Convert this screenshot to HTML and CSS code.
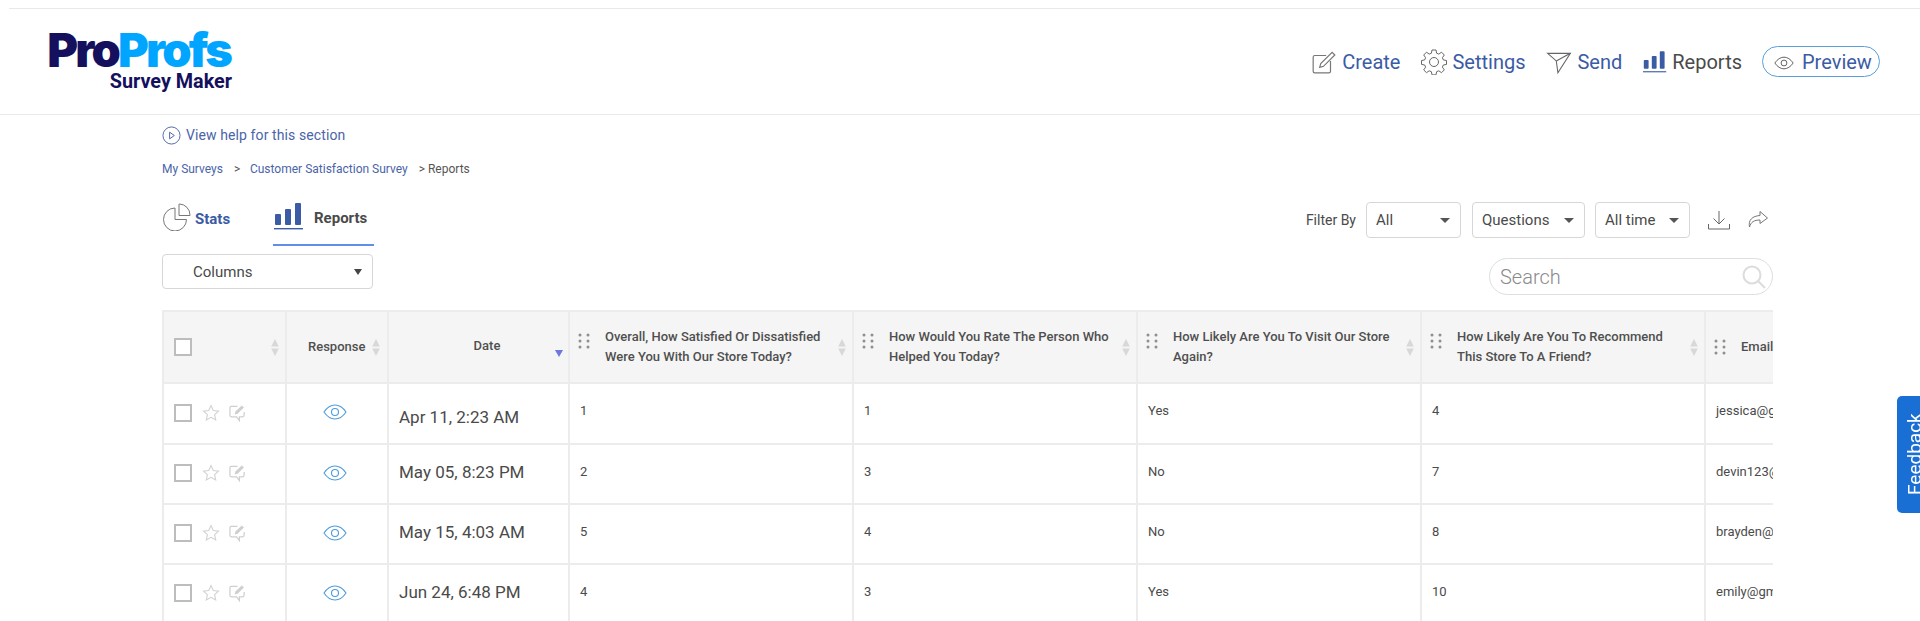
FILE: index.html
```html
<!DOCTYPE html>
<html lang="en">
<head>
<meta charset="utf-8">
<title>ProProfs Survey Maker - Reports</title>
<link rel="stylesheet" href="styles.css">
</head>
<body>
<svg class="sprites" width="0" height="0" aria-hidden="true">
  <symbol id="bars" viewBox="0 0 30 27"><rect x="1" y="11" width="6" height="11" rx="1"/><rect x="11" y="6" width="6" height="16" rx="1"/><rect x="21" y="0" width="6" height="22" rx="1"/><rect x="0" y="25" width="29" height="1.4"/></symbol>
  <symbol id="sort" viewBox="0 0 10 18"><path d="M5 0l4 8H1zM5 18l4-8H1z"/></symbol>
  <symbol id="grip" viewBox="0 0 12 16"><g><circle cx="2" cy="2" r="1.5"/><circle cx="10" cy="2" r="1.5"/><circle cx="2" cy="8" r="1.5"/><circle cx="10" cy="8" r="1.5"/><circle cx="2" cy="14" r="1.5"/><circle cx="10" cy="14" r="1.5"/></g></symbol>
  <symbol id="eye" viewBox="0 0 24 16"><path d="M1 8c3-4.500 7-7 11-7s8 2.500 11 7c-3 4.500-7 7-11 7S4 12.500 1 8z" fill="none" stroke="currentColor" stroke-width="1.100"/><circle cx="12" cy="8" r="3.500" fill="none" stroke="currentColor" stroke-width="1.100"/></symbol>
  <symbol id="star" viewBox="0 0 18 18"><path d="M9 1.500l2.300 5 5.200.6-3.900 3.500 1.100 5.400L9 13.300 4.300 16l1.100-5.400-3.900-3.500 5.200-.6z" fill="none" stroke="currentColor" stroke-width="1.100"/></symbol>
  <symbol id="note" viewBox="0 0 18 18"><path d="M9 2H2.500A1.500 1.500 0 0 0 1 3.500v8A1.500 1.500 0 0 0 2.500 13H8l3 4v-4h3.500A1.500 1.500 0 0 0 16 11.500V8" fill="none" stroke="currentColor" stroke-width="1.300"/><path d="M6 10.500l.8-3L13.500 1l2.300 2.300-6.700 6.500z" fill="currentColor"/></symbol>
</svg>

<header class="site-header">
  <div class="top-rule"></div>
  <div class="header-row">
    <a class="logo">
      <span class="logo-main"><span class="logo-pro">Pro</span><span class="logo-profs">Profs</span></span>
      <span class="logo-sub">Survey Maker</span>
    </a>
    <nav class="main-nav">
      <a class="nav-item">
        <svg class="nav-icon" viewBox="0 0 24 24" fill="none" stroke="#777" stroke-width="1.100"><path d="M14 6H3.500A1.500 1.500 0 0 0 2 7.500v13A1.500 1.500 0 0 0 3.500 22h13a1.500 1.500 0 0 0 1.500-1.500V11"/><path d="M9 13.500l-1 3.500 3.500-1L22 5.500 19.500 3z"/></svg>
        <span>Create</span>
      </a>
      <a class="nav-item">
        <svg class="nav-icon" viewBox="0 0 26 26" fill="none" stroke="#666" stroke-width="1"><path d="M11 1.500h4l.6 3.200 2.200.9 2.700-1.900 2.800 2.800-1.900 2.700.9 2.200 3.200.6v3.900l-3.200.6-.9 2.200 1.900 2.700-2.800 2.800-2.700-1.900-2.200.9-.6 3.200h-4l-.6-3.200-2.200-.9-2.700 1.900-2.800-2.800 1.900-2.700-.9-2.200-3.200-.6v-3.900l3.200-.6.9-2.200-1.900-2.700 2.800-2.800 2.700 1.900 2.200-.9z" transform="translate(0 -.5)"/><circle cx="13" cy="13" r="4.500"/></svg>
        <span>Settings</span>
      </a>
      <a class="nav-item">
        <svg class="nav-icon" viewBox="0 0 24 24" fill="none" stroke="#666" stroke-width="1"><path d="M1.500 4h21L11 22l-1.500-11z"/><path d="M9.500 11L22.500 4"/></svg>
        <span>Send</span>
      </a>
      <a class="nav-item nav-active">
        <svg class="nav-icon bars-icon"><use href="#bars"/></svg>
        <span>Reports</span>
      </a>
      <a class="nav-preview">
        <svg class="preview-eye"><use href="#eye"/></svg>
        <span>Preview</span>
      </a>
    </nav>
  </div>
</header>

<main class="content">
  <a class="help-link">
    <svg class="help-icon" viewBox="0 0 20 20" fill="none" stroke="#4a64a8" stroke-width="1"><circle cx="10" cy="10" r="9"/><path d="M8 6.500l5 3.500-5 3.500z"/></svg>
    <span>View help for this section</span>
  </a>
  <div class="crumbs">
    <a>My Surveys</a><span class="crumb-sep">&gt;</span><a>Customer Satisfaction Survey</a><span class="crumb-now">&gt; Reports</span>
  </div>

  <div class="toolbar">
    <div class="tabs">
      <a class="tab tab-stats">
        <svg class="stats-icon" viewBox="0 0 28 28" fill="none" stroke="#777" stroke-width="1"><path d="M12 5a11.500 11.500 0 1 0 11.500 11.500H12z"/><path d="M16 1h.5A11 11 0 0 1 27 12v.5H16z"/></svg>
        <span>Stats</span>
      </a>
      <a class="tab tab-reports">
        <svg class="tab-bars"><use href="#bars"/></svg>
        <span>Reports</span>
      </a>
    </div>
    <div class="filters">
      <span class="filter-label">Filter By</span>
      <div class="select sel-all"><span>All</span><i class="caret"></i></div>
      <div class="select sel-q"><span>Questions</span><i class="caret"></i></div>
      <div class="select sel-time"><span>All time</span><i class="caret"></i></div>
      <svg class="tool-icon dl" viewBox="0 0 22 20" fill="none" stroke="#666" stroke-width="1"><path d="M11 1v13M5.500 8.500L11 14l5.500-5.500M.5 14v5h21v-5"/></svg>
      <svg class="tool-icon share" viewBox="0 0 22 20" fill="none" stroke="#777" stroke-width="1"><path d="M13 1.500l7.500 6.500-7.500 5.500v-3.500c-6 0-9 2-10.500 7-1.500-7 3-11 10.500-11.500z"/></svg>
    </div>
  </div>

  <div class="controls">
    <div class="select columns-select"><span>Columns</span><i class="caret caret-dark"></i></div>
    <div class="search"><span>Search</span>
      <svg class="search-icon" viewBox="0 0 24 24" fill="none" stroke="#dcdcdc" stroke-width="2"><circle cx="10" cy="10" r="8.500"/><path d="M16 16l7 7"/></svg>
    </div>
  </div>

  <div class="table-wrap">
    <table class="grid">
      <colgroup><col class="c1"><col class="c2"><col class="c3"><col class="c4"><col class="c4"><col class="c4"><col class="c4"><col class="c5"></colgroup>
      <thead>
        <tr>
          <th><div class="th-in th-first"><i class="box"></i><svg class="sort"><use href="#sort"/></svg></div></th>
          <th><div class="th-in th-resp"><span>Response</span><svg class="sort"><use href="#sort"/></svg></div></th>
          <th><div class="th-date"><span>Date</span><i class="sort-down"></i></div></th>
          <th><div class="th-in"><svg class="grip"><use href="#grip"/></svg><span class="q">Overall, How Satisfied Or Dissatisfied Were You With Our Store Today?</span><svg class="sort"><use href="#sort"/></svg></div></th>
          <th><div class="th-in"><svg class="grip"><use href="#grip"/></svg><span class="q">How Would You Rate The Person Who Helped You Today?</span><svg class="sort"><use href="#sort"/></svg></div></th>
          <th><div class="th-in"><svg class="grip"><use href="#grip"/></svg><span class="q">How Likely Are You To Visit Our Store Again?</span><svg class="sort"><use href="#sort"/></svg></div></th>
          <th><div class="th-in"><svg class="grip"><use href="#grip"/></svg><span class="q">How Likely Are You To Recommend This Store To A Friend?</span><svg class="sort"><use href="#sort"/></svg></div></th>
          <th><div class="th-in th-email"><svg class="grip"><use href="#grip"/></svg><span class="q">Email</span></div></th>
        </tr>
      </thead>
      <tbody>
        <tr class="row-first">
          <td><div class="row-tools"><i class="box"></i><svg class="star"><use href="#star"/></svg><svg class="note"><use href="#note"/></svg></div></td>
          <td class="eye-cell"><svg class="eye"><use href="#eye"/></svg></td>
          <td class="date date-first">Apr 11, 2:23 AM</td>
          <td>1</td><td>1</td><td>Yes</td><td>4</td><td class="clip">jessica@gmail.com</td>
        </tr>
        <tr>
          <td><div class="row-tools"><i class="box"></i><svg class="star"><use href="#star"/></svg><svg class="note"><use href="#note"/></svg></div></td>
          <td class="eye-cell"><svg class="eye"><use href="#eye"/></svg></td>
          <td class="date">May 05, 8:23 PM</td>
          <td>2</td><td>3</td><td>No</td><td>7</td><td class="clip">devin123@gmail.com</td>
        </tr>
        <tr>
          <td><div class="row-tools"><i class="box"></i><svg class="star"><use href="#star"/></svg><svg class="note"><use href="#note"/></svg></div></td>
          <td class="eye-cell"><svg class="eye"><use href="#eye"/></svg></td>
          <td class="date">May 15, 4:03 AM</td>
          <td>5</td><td>4</td><td>No</td><td>8</td><td class="clip">brayden@gmail.com</td>
        </tr>
        <tr>
          <td><div class="row-tools"><i class="box"></i><svg class="star"><use href="#star"/></svg><svg class="note"><use href="#note"/></svg></div></td>
          <td class="eye-cell"><svg class="eye"><use href="#eye"/></svg></td>
          <td class="date">Jun 24, 6:48 PM</td>
          <td>4</td><td>3</td><td>Yes</td><td>10</td><td class="clip">emily@gmail.com</td>
        </tr>
      </tbody>
    </table>
  </div>
</main>

<a class="feedback"><span>Feedback</span></a>
</body>
</html>
```

FILE: styles.css
```css
* { box-sizing: border-box; }
html, body { margin: 0; height: 621px; overflow: hidden; background: #fff; }
body { font-family: Roboto, "Liberation Sans", sans-serif; color: #4a4a4a; }
.sprites { position: absolute; }
i { display: block; }
svg { display: block; flex: none; }

/* header */
.site-header { height: 115px; border-bottom: 1px solid #e9e9ee; padding-top: 8px; }
.top-rule { margin-left: 9px; border-top: 1px solid #e8e8ee; }
.header-row { display: flex; justify-content: space-between; height: 105px; }
.logo { display: flex; flex-direction: column; align-items: flex-end; width: 183px; margin: 20px 0 0 49px; }
.logo-main { font-family: Inter, "Liberation Sans", sans-serif; font-weight: 900; font-size: 47px; line-height: 42px; letter-spacing: -2.800px; margin-right: 2px; white-space: nowrap; }
.logo-pro { color: #14105e; }
.logo-profs { color: #00a5ff; }
.logo-sub { font-weight: 700; font-size: 19.800px; line-height: 21px; color: #14105e; white-space: nowrap; }

.main-nav { display: flex; align-items: center; height: 31px; margin: 37px 40px 0 0; font-size: 20px; color: #3b5ba5; }
.nav-item { display: flex; align-items: center; gap: 5px; margin-right: 21px; }
.nav-icon { width: 26px; height: 26px; }
.bars-icon { width: 24px; height: 24px; fill: #3b5ba5; }
.nav-active { color: #4a4a4a; }
.nav-preview { display: flex; align-items: center; gap: 8px; width: 118px; height: 31px; margin-left: -1px; padding-left: 11px; border: 1px solid #5a9fdc; border-radius: 16px; }
.preview-eye { width: 20px; height: 14px; color: #555; margin-top: 3px; }

/* content */
.content { margin-left: 162px; width: 1611px; }
.help-link { display: flex; align-items: center; gap: 5px; margin-top: 10px; height: 20px; font-size: 14px; letter-spacing: .1px; color: #4a64a8; }
.help-icon { width: 19px; height: 19px; }
.crumbs { display: flex; margin-top: 17px; font-size: 12px; line-height: 14px; color: #4a64a8; }
.crumb-sep { width: 27px; padding-left: 11px; color: #555; }
.crumb-now { margin-left: 11px; color: #555; }

.toolbar { display: flex; justify-content: space-between; margin-top: 27px; height: 48px; }
.tabs { display: flex; align-items: flex-start; }
.tab { display: flex; font-size: 15px; font-weight: 700; }
.tab-stats { width: 111px; padding-left: 1px; gap: 4px; color: #3b5ba5; }
.stats-icon { width: 28px; height: 28px; }
.tab-stats span { margin-top: 7px; }
.tab-reports { width: 101px; height: 43px; padding-left: 1px; gap: 10px; border-bottom: 2px solid #5f8fe8; }
.tab-reports span { margin-top: 6px; }
.tab-bars { width: 30px; height: 27px; fill: #3b5ba5; }

.filters { display: flex; align-items: flex-start; padding-right: 4px; margin-top: -1px; }
.filter-label { font-size: 14px; line-height: 36px; margin-right: 10px; }
.select { display: flex; align-items: center; justify-content: space-between; height: 36px; border: 1px solid #d6d6d6; border-radius: 4px; font-size: 15px; padding: 0 10px 0 9px; }
.sel-all { width: 95px; }
.sel-q { width: 113px; margin-left: 11px; }
.sel-time { width: 95px; margin-left: 10px; }
.caret { width: 0; height: 0; border: 5px solid transparent; border-top-color: #555; border-bottom: 0; }
.tool-icon { width: 22px; height: 22px; margin-top: 7px; }
.dl { margin-left: 18px; }
.share { margin-left: 17px; }

.controls { display: flex; justify-content: space-between; margin-top: 4px; height: 55px; }
.select.columns-select { width: 211px; height: 35px; padding: 0 10px 0 30px; margin-top: -1px; }
.caret-dark { border-top-color: #444; border-width: 6px 4.500px 0; }
.search { display: flex; align-items: center; justify-content: space-between; width: 284px; height: 37px; margin-top: 3px; padding: 0 6px 0 10px; border: 1px solid #dedede; border-radius: 19px; font-size: 20px; font-weight: 300; color: #8a8a8a; }
.search-icon { width: 24px; height: 24px; }

/* table */
.table-wrap { overflow: hidden; width: 1611px; }
.grid { table-layout: fixed; width: 1668px; border-collapse: collapse; font-size: 13px; }
.c1 { width: 123px; }
.c2 { width: 102px; }
.c3 { width: 181px; }
.c4 { width: 284px; }
.c5 { width: 126px; }
.grid th, .grid td { border: 2px solid #ececec; padding: 0; }
.grid thead tr { height: 72px; background: #f5f5f5; }
.grid tbody tr { height: 60px; }
.grid tbody tr.row-first { height: 61px; }
.grid th { font-size: 13px; font-weight: 500; line-height: 20px; text-align: left; color: #4f4f4f; }
.grid td { padding-left: 10px; padding-bottom: 6px; color: #4a4a4a; }
.grid td.clip { white-space: nowrap; overflow: hidden; }

.th-in { display: flex; align-items: center; justify-content: space-between; padding: 0 5px 0 8px; }
.th-in.th-first { padding-left: 10px; }
.th-in.th-resp { padding-left: 21px; justify-content: flex-start; gap: 6px; }
.th-in.th-email { justify-content: flex-start; }
.th-date { position: relative; text-align: center; padding-left: 17px; margin-top: -2px; }
.sort-down { position: absolute; right: 5px; top: 14px; border: 4.500px solid transparent; border-top: 7px solid #6b78e0; border-bottom: 0; }
.box { width: 18px; height: 18px; background: #fff; border: 2px solid #bdbdbd; }
.sort { width: 10px; height: 17px; fill: #d8d8d8; }
.grip { width: 12px; height: 16px; fill: #8f8f8f; margin-top: -12px; margin-right: 15px; }
.th-email .grip { margin-top: 0; }
.q { flex: 1; }

.row-tools { display: flex; align-items: center; gap: 10px; margin-top: 4px; }
.star { width: 18px; height: 18px; color: #d2d2d2; }
.note { width: 17px; height: 18px; color: #cfcfcf; margin-left: -1px; }
.eye-cell { text-align: center; }
.grid td.eye-cell { padding: 0 4px 0 0; }
.eye { display: inline-block; width: 24px; height: 16px; color: #4f9bdc; }
.grid td.date { font-size: 17px; padding-bottom: 4px; }
.grid td.date-first { padding-top: 6px; padding-bottom: 0; }

/* feedback tab */
.feedback { position: fixed; right: 0; top: 396px; display: flex; justify-content: flex-end; width: 23px; height: 117px; background: #1a6fd4; border-radius: 5px 0 0 5px; overflow: hidden; color: #fff; font-size: 19px; }
.feedback span { writing-mode: vertical-rl; transform: rotate(180deg); line-height: 24px; text-align: center; height: 117px; margin-right: -7px; }
```
